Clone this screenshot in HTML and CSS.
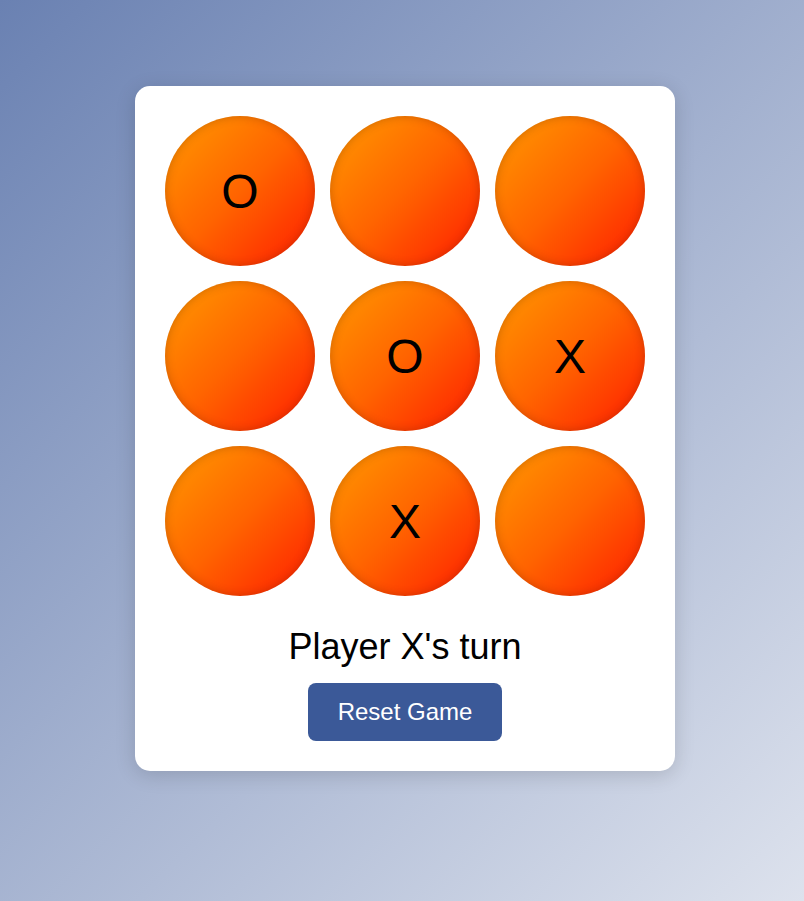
FILE: index.html
```html
<!DOCTYPE html>
<html>
<head>
<meta charset="utf-8">
<link rel="stylesheet" href="styles.css">
</head>
<body>
<div class="card">
  <div class="board">
    <div class="cell">O</div>
    <div class="cell"></div>
    <div class="cell"></div>
    <div class="cell"></div>
    <div class="cell">O</div>
    <div class="cell">X</div>
    <div class="cell"></div>
    <div class="cell">X</div>
    <div class="cell"></div>
  </div>
  <div class="status">Player X's turn</div>
  <button class="reset">Reset Game</button>
</div>
</body>
</html>
```
FILE: styles.css
```css
html, body {
  margin: 0;
  height: 100%;
}
body {
  font-family: "Liberation Sans", Arial, sans-serif;
  background: linear-gradient(135deg, #6a81b2 0%, #dde2ed 100%);
  display: flex;
  justify-content: center;
  align-items: flex-start;
}
.card {
  margin-top: 86px;
  margin-left: 6px;
  background: #fff;
  border-radius: 15px;
  padding: 30px;
  box-shadow: 0 4px 20px rgba(0, 0, 0, 0.15);
  display: flex;
  flex-direction: column;
  align-items: center;
}
.board {
  display: grid;
  grid-template-columns: repeat(3, 150px);
  grid-auto-rows: 150px;
  gap: 15px;
}
.cell {
  width: 150px;
  height: 150px;
  border-radius: 50%;
  background: linear-gradient(135deg, #ff9a00 0%, #ff6400 50%, #ff1c00 100%);
  box-shadow: inset 0 0 10px rgba(90, 30, 0, 0.3);
  display: flex;
  align-items: center;
  justify-content: center;
  font-size: 48px;
  color: #000;
}
.status {
  font-size: 36px;
  line-height: 41px;
  margin-top: 30px;
  margin-bottom: 16px;
  color: #000;
}
.reset {
  font-family: "Liberation Sans", Arial, sans-serif;
  font-size: 24px;
  line-height: 28px;
  padding: 15px 30px;
  border: none;
  border-radius: 8px;
  background: #3b5998;
  color: #fff;
}
```
